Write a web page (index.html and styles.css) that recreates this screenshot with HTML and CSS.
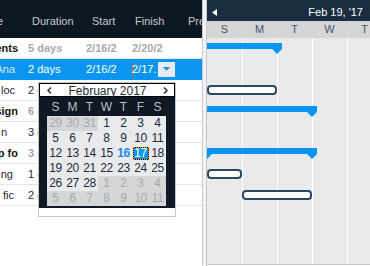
FILE: index.html
```html
<!DOCTYPE html>
<html>
<head>
<meta charset="utf-8">
<title>Gantt</title>
<link rel="stylesheet" href="styles.css">
</head>
<body>
<div class="app">
  <div class="grid">
    <div class="ghead">
      <div class="c name hname"><span>e</span></div>
      <div class="c dur h-dur">Duration</div>
      <div class="c start h-start">Start</div>
      <div class="c fin h-fin">Finish</div>
      <div class="c pre h-pre">Pre</div>
    </div>
    <div class="row summary">
      <div class="c name e6"><span>ents</span></div>
      <div class="c dur">5 days</div>
      <div class="c start">2/16/2</div>
      <div class="c fin">2/20/2</div>
    </div>
    <div class="row selected">
      <div class="c name e9"><span>Ana</span></div>
      <div class="c dur">2 days</div>
      <div class="c start">2/16/2</div>
      <div class="c fin editor"><i class="caret"></i><span>2/17.</span><span class="ddbtn"><svg width="7" height="4" viewBox="0 0 7 4"><polygon points="0,0 7,0 3.5,4" fill="#1d8fe6"/></svg></span></div>
    </div>
    <div class="row under">
      <div class="c name e9"><span>loc</span></div>
      <div class="c dur">2 d</div>
    </div>
    <div class="row under summary">
      <div class="c name e6"><span>sign</span></div>
      <div class="c dur">6 d</div>
    </div>
    <div class="row under">
      <div class="c name e17"><span>n</span></div>
      <div class="c dur">3 d</div>
    </div>
    <div class="row under summary">
      <div class="c name e6"><span>p fo</span></div>
      <div class="c dur">3 d</div>
    </div>
    <div class="row under">
      <div class="c name e11"><span>ng</span></div>
      <div class="c dur">1 d</div>
    </div>
    <div class="row under">
      <div class="c name e10"><span>fic</span></div>
      <div class="c dur">2 d</div>
    </div>
  </div>

  <div class="splitter"></div>

  <div class="chart">
    <div class="chead">
      <svg class="prev" width="5" height="7" viewBox="0 0 5 7"><polygon points="5,0 5,7 0,3.5" fill="#ffffff"/></svg>
      <span>Feb 19, '17</span>
    </div>
    <div class="cdays"><span>S</span><span>M</span><span>T</span><span>W</span><span>T</span></div>
    <div class="cbody">
      <div class="crow"><div class="sbar" style="left:-20px;width:95px"></div></div>
      <div class="crow"></div>
      <div class="crow"><div class="tbar" style="left:0;width:70px"></div></div>
      <div class="crow"><div class="sbar" style="left:-50px;width:160px"></div></div>
      <div class="crow"></div>
      <div class="crow"><div class="sbar" style="left:-5px;width:115px"></div></div>
      <div class="crow"><div class="tbar" style="left:0;width:35px"></div></div>
      <div class="crow"><div class="tbar" style="left:35px;width:70px"></div></div>
    </div>
  </div>

  <div class="cal">
    <div class="cal-title">
      <svg width="5" height="7" viewBox="0 0 5 7"><polyline points="4,0.5 1,3.5 4,6.5" fill="none" stroke="#1b2633" stroke-width="1.4"/></svg>
      <span>February 2017</span>
      <svg width="5" height="7" viewBox="0 0 5 7"><polyline points="1,0.5 4,3.5 1,6.5" fill="none" stroke="#1b2633" stroke-width="1.4"/></svg>
    </div>
    <div class="cal-body">
      <div class="cal-dow"><span>S</span><span>M</span><span>T</span><span>W</span><span>T</span><span>F</span><span>S</span></div>
      <div class="cal-days">
        <span class="o">29</span><span class="o">30</span><span class="o">31</span><span>1</span><span>2</span><span>3</span><span>4</span>
        <span>5</span><span>6</span><span>7</span><span>8</span><span>9</span><span>10</span><span>11</span>
        <span>12</span><span>13</span><span>14</span><span>15</span><span class="today">16</span><span class="selday"><b>17</b></span><span>18</span>
        <span>19</span><span>20</span><span>21</span><span>22</span><span>23</span><span>24</span><span>25</span>
        <span>26</span><span>27</span><span>28</span><span class="o">1</span><span class="o">2</span><span class="o">3</span><span class="o">4</span>
        <span class="o">5</span><span class="o">6</span><span class="o">7</span><span class="o">8</span><span class="o">9</span><span class="o">10</span><span class="o">11</span>
      </div>
    </div>
    <div class="cal-foot"></div>
  </div>
</div>
</body>
</html>
```

FILE: styles.css
```css
* { box-sizing: border-box; }
html, body { margin: 0; padding: 0; }
body {
  width: 370px;
  height: 266px;
  overflow: hidden;
  background: #ffffff;
  font-family: "Liberation Sans", Arial, sans-serif;
  font-size: 11px;
}
.app {
  position: relative;
  display: flex;
  width: 370px;
  height: 266px;
}

/* ---------- left grid ---------- */
.grid {
  flex: none;
  width: 203px;
  height: 266px;
  border-right: 1px solid #c6c9cd;
  overflow: hidden;
  background: #ffffff;
}
.ghead {
  height: 38px;
  display: flex;
  align-items: center;
  padding-top: 3px;
  background: #0e1822;
  color: #c3c9cf;
}
.row {
  height: 21px;
  display: flex;
  align-items: center;
  border-bottom: 1px solid #e3e5e8;
  color: #1d2c3c;
}
.c {
  flex: none;
  white-space: nowrap;
  overflow: hidden;
  padding-left: 4px;
}
.name {
  width: 24px;
  padding-left: 0;
  display: flex;
  justify-content: flex-end;
}
.dur { width: 58px; }
.start { width: 46px; }
.fin { width: 47px; }
.pre { width: 43px; }

/* rows whose right part is hidden by the date popup */
.under .dur { width: 14px; }

.hname { padding-right: 21px; }
.h-dur { padding-left: 8px; }
.h-start { padding-left: 10px; }
.h-fin { padding-left: 7px; }
.h-pre { padding-left: 13px; }

.e6 { padding-right: 6px; }
.e9 { padding-right: 9px; }
.e10 { padding-right: 10px; }
.e11 { padding-right: 11px; }
.e17 { padding-right: 17px; }

.summary .name { font-weight: bold; color: #141414; }
.summary .dur,
.summary .start,
.summary .fin { font-weight: bold; color: #a5a9ad; }

.selected {
  background: #0a96f0;
  border-bottom-color: #0a96f0;
  color: #ffffff;
}
.selected .name { color: #d6ebff; }
.editor {
  display: flex;
  align-items: center;
  height: 21px;
  overflow: visible;
}
.caret {
  display: block;
  width: 1px;
  height: 13px;
  margin-right: -1px;
  background: #ee5a1c;
}
.ddbtn {
  margin-left: auto;
  width: 17px;
  height: 15px;
  display: flex;
  align-items: center;
  justify-content: center;
  background: #e4ebf2;
}

/* ---------- splitter ---------- */
.splitter {
  flex: none;
  width: 3px;
  background: #f2f3f4;
}

/* ---------- chart ---------- */
.chart {
  flex: none;
  width: 164px;
  height: 266px;
  border-left: 1px solid #c6c9cd;
  overflow: hidden;
}
.chead {
  height: 21px;
  display: flex;
  align-items: center;
  justify-content: space-between;
  padding: 3px 7px 0 5px;
  background: #1b2d40;
  color: #ffffff;
}
.cdays {
  height: 17px;
  display: flex;
  background: #d4d5d7;
  color: #4a5663;
}
.cdays span {
  flex: none;
  width: 35px;
  text-align: center;
  line-height: 17px;
}
.cbody {
  height: 227px;
  border-bottom: 1px solid #c6c9cd;
  overflow: hidden;
  background: linear-gradient(to right,
    #e9eaec 0 35px, #ffffff 35px 36px,
    #e9eaec 36px 70px, #ffffff 70px 71px,
    #e9eaec 71px 105px, #ffffff 105px 106px,
    #e9eaec 106px 140px, #ffffff 140px 141px,
    #e9eaec 141px);
}
.crow {
  position: relative;
  height: 21px;
}
.sbar {
  position: absolute;
  top: 5px;
  height: 6px;
  background: #0a96f0;
}
.sbar::before,
.sbar::after {
  content: "";
  position: absolute;
  top: 6px;
  width: 0;
  height: 0;
  border-left: 5px solid transparent;
  border-right: 5px solid transparent;
  border-top: 5px solid #0a96f0;
}
.sbar::before { left: 0; }
.sbar::after { right: 0; }
.tbar {
  position: absolute;
  top: 5px;
  height: 10px;
  background: #ffffff;
  border: 2px solid #2a4862;
  border-radius: 4px;
}

/* ---------- calendar popup ---------- */
.cal {
  position: absolute;
  left: 38px;
  top: 82px;
  width: 138px;
  height: 135px;
  border: 1px solid #c4c6c9;
  background: #ffffff;
  font-size: 12px;
}
.cal-title {
  height: 14px;
  border: 1px solid #000000;
  display: flex;
  align-items: center;
  justify-content: space-between;
  padding: 1px 6px 0 7px;
  color: #1e2a38;
  line-height: 12px;
}
.cal-body {
  height: 111px;
  padding: 0 8px 2px;
  background: #0f1823;
}
.cal-dow {
  height: 19px;
  display: grid;
  grid-template-columns: repeat(7, 17px);
  align-items: center;
  color: #b8bfc7;
}
.cal-dow span { text-align: center; padding-top: 1px; }
.cal-days {
  display: grid;
  grid-template-columns: repeat(7, 17px);
  grid-auto-rows: 15px;
}
.cal-days span {
  display: flex;
  align-items: center;
  justify-content: center;
  background: #e9eaec;
  color: #1d2b3a;
  line-height: 15px;
  letter-spacing: -0.3px;
}
.cal-days .o {
  background: #d5d6d8;
  color: #a6abb1;
}
.cal-days .today {
  color: #1a8ae8;
  font-weight: bold;
}
.cal-days .selday b {
  display: block;
  width: 16px;
  height: 13px;
  line-height: 11px;
  text-align: center;
  font-weight: normal;
  color: #ffffff;
  border: 1px dotted #ff9000;
  background: linear-gradient(#0a96f0, #0a96f0) padding-box, linear-gradient(#000000, #000000) border-box;
}
.cal-foot {
  height: 8px;
  background: #ffffff;
}
```
